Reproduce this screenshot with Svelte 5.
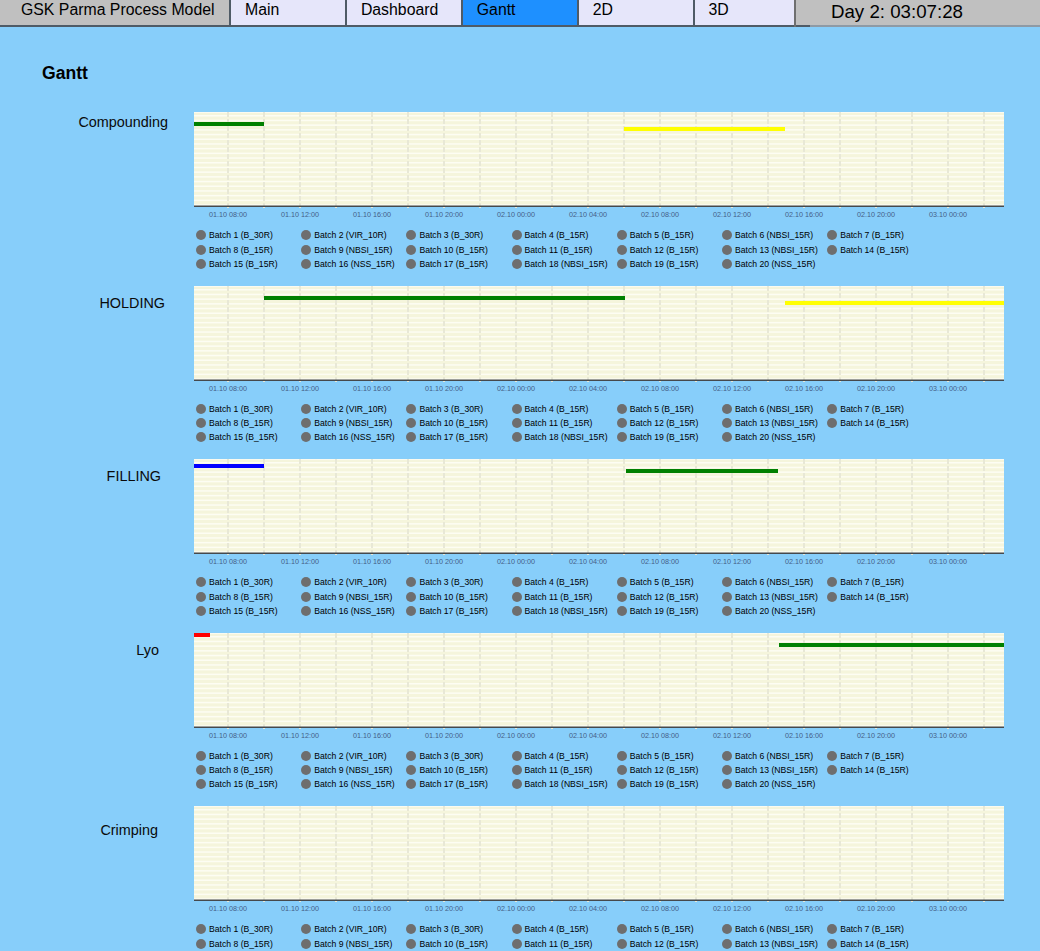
<script lang="ts">
  const tabs = ['Main', 'Dashboard', 'Gantt', '2D', '3D'];
  const active = 'Gantt';

  const batches = [
    'Batch 1 (B_30R)', 'Batch 2 (VIR_10R)', 'Batch 3 (B_30R)', 'Batch 4 (B_15R)', 'Batch 5 (B_15R)', 'Batch 6 (NBSI_15R)', 'Batch 7 (B_15R)',
    'Batch 8 (B_15R)', 'Batch 9 (NBSI_15R)', 'Batch 10 (B_15R)', 'Batch 11 (B_15R)', 'Batch 12 (B_15R)', 'Batch 13 (NBSI_15R)', 'Batch 14 (B_15R)',
    'Batch 15 (B_15R)', 'Batch 16 (NSS_15R)', 'Batch 17 (B_15R)', 'Batch 18 (NBSI_15R)', 'Batch 19 (B_15R)', 'Batch 20 (NSS_15R)'
  ];

  // x is in chart pixels, band is the batch's lane
  const rows = [
    { name: 'Compounding', right: 26, top: 2, bars: [
      { x: 0, w: 70, band: 2, color: '#008000' },
      { x: 430, w: 161, band: 3, color: '#ffff00' }
    ] },
    { name: 'HOLDING', right: 29, top: 9, bars: [
      { x: 70, w: 361, band: 2, color: '#008000' },
      { x: 591, w: 219, band: 3, color: '#ffff00' }
    ] },
    { name: 'FILLING', right: 33, top: 9, bars: [
      { x: 0, w: 70, band: 1, color: '#0000ff' },
      { x: 432, w: 152, band: 2, color: '#008000' }
    ] },
    { name: 'Lyo', right: 35, top: 9, bars: [
      { x: 0, w: 16, band: 0, color: '#ff0000' },
      { x: 585, w: 225, band: 2, color: '#008000' }
    ] },
    { name: 'Crimping', right: 36, top: 16, bars: [] }
  ];

  const W = 810;
  const H = 94;
  const band = 4.7;
  const lanes = Array.from({ length: 20 }, (_, i) => i);
  const grid = Array.from({ length: 22 }, (_, i) => 34 + i * 36);
  const ticks = [
    '01.10 08:00', '01.10 12:00', '01.10 16:00', '01.10 20:00', '02.10 00:00', '02.10 04:00',
    '02.10 08:00', '02.10 12:00', '02.10 16:00', '02.10 20:00', '03.10 00:00'
  ];
</script>

<div class="page">
  <header class="topbar">
    <div class="title">GSK Parma Process Model</div>
    {#each tabs as tab}
      <div class="tab" class:active={tab === active} class:narrow={tab === '3D'}>{tab}</div>
    {/each}
    <div class="clock">Day 2: 03:07:28</div>
  </header>

  <main class="content">
    <h3 class="heading">Gantt</h3>

    {#each rows as row}
      <section class="row">
        <div class="label" style="padding-right: {row.right}px; padding-top: {row.top}px">{row.name}</div>
        <div class="chart">
          <svg width={W} height="116" viewBox="0 0 {W} 116">
            <rect width={W} height={H} fill="#f5f5dc" />
            {#each lanes as i}
              <rect y={i * band + 3} width={W} height="1.5" fill="#fdfdf3" />
            {/each}
            <rect width={W} height="1" fill="#fbfbf0" />
            {#each grid as x}
              <line x1={x} x2={x} y1="0" y2={H + 4} stroke="#e8e8d6" stroke-width="2" stroke-dasharray="5 2" />
            {/each}
            {#each row.bars as bar}
              <rect x={bar.x} y={bar.band * 5} width={bar.w} height="4" fill={bar.color} />
            {/each}
            <rect y={H - 0.5} width={W} height="1.5" fill="#45494c" />
            {#each ticks as tick, i}
              <text x={34 + i * 72} y="105" text-anchor="middle" class="tick">{tick}</text>
            {/each}
          </svg>
          <ul class="legend">
            {#each batches as batch}
              <li><span class="dot"></span>{batch}</li>
            {/each}
          </ul>
        </div>
      </section>
    {/each}
  </main>
</div>

<style>
  :global(html),
  :global(body) {
    margin: 0;
    overflow: hidden;
  }

  .page {
    height: 951px;
    overflow: hidden;
    background: #87cefa;
    font-family: 'Liberation Sans', Arial, sans-serif;
    color: #000;
  }

  .topbar {
    display: flex;
    height: 25px;
    border-bottom: 2px solid #4f5b66;
    background: #c0c0c0;
    font-size: 15.84px;
    line-height: 20px;
  }

  .title {
    width: 229px;
    box-sizing: border-box;
    padding-left: 21px;
    white-space: nowrap;
  }

  .tab {
    width: 115.9px;
    box-sizing: border-box;
    padding-left: 14px;
    border-left: 2px solid #4f5b66;
    background: #e6e6fa;
  }

  .tab.narrow {
    width: 101.4px;
  }

  .tab.active {
    background: #1e90ff;
  }

  .clock {
    flex: 1;
    height: 27px;
    margin-bottom: -2px;
    padding-left: 35px;
    border-left: 2px solid #6f6f6f;
    background: linear-gradient(to right, #4f5b66 14px, #8e9aa5 14px) bottom / 100% 2px no-repeat, #c0c0c0;
    font-size: 18.72px;
    line-height: 24px;
  }

  .content {
    padding-top: 36px;
  }

  .heading {
    margin: 0 0 0 42px;
    font-size: 17.6px;
    line-height: 20px;
    font-weight: bold;
  }

  .row {
    display: flex;
    height: 173.5px;
  }

  .row:first-of-type {
    margin-top: 29px;
  }

  .label {
    width: 194px;
    box-sizing: border-box;
    text-align: right;
    font-size: 14.4px;
    line-height: 16px;
    color: #0a0a0a;
  }

  .chart {
    width: 846px;
    flex: none;
  }

  .chart svg {
    display: block;
  }

  .tick {
    font-family: 'Liberation Sans', Arial, sans-serif;
    font-size: 7.2px;
    fill: #456088;
  }

  .legend {
    display: grid;
    grid-template-columns: repeat(7, 105.2px);
    grid-auto-rows: 14.2px;
    margin: 0.3px 0 0;
    padding: 0 0 0 2px;
    list-style: none;
    font-size: 8.64px;
  }

  .legend li {
    display: flex;
    align-items: center;
    gap: 3px;
    white-space: nowrap;
  }

  .dot {
    width: 10px;
    height: 10px;
    border-radius: 50%;
    background: #6e6e6e;
    flex: none;
  }
</style>
